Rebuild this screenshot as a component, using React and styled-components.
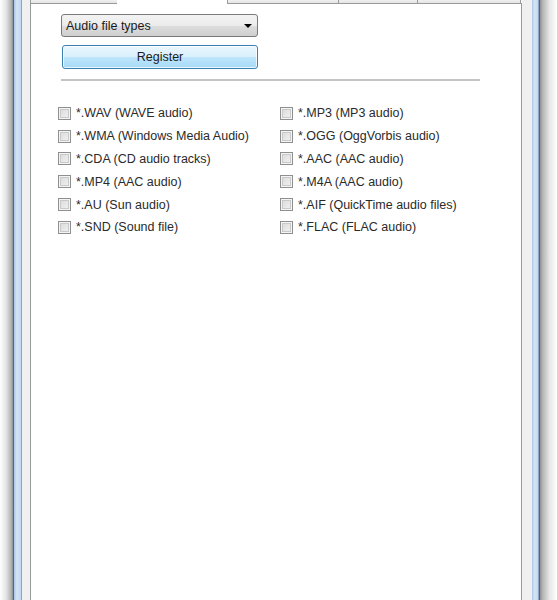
import React from "react";
import styled, { createGlobalStyle } from "styled-components";

const Global = createGlobalStyle`
  html, body { margin: 0; padding: 0; background: #fff; }
  body { font-family: "Liberation Sans", Arial, sans-serif; font-size: 12.5px; color: #1e1e1e; }
`;

const Window = styled.div`
  display: flex;
  width: 557px;
  height: 600px;
  overflow: hidden;
`;

const Frame = styled.div`
  display: flex;
  flex-direction: ${(p) => (p.$side === "right" ? "row-reverse" : "row")};
  flex: none;
`;

const Shade = styled.div`
  width: ${(p) => p.$w}px;
  background: linear-gradient(
    to ${(p) => (p.$side === "right" ? "left" : "right")},
    #ffffff 0%,
    #e6e6e6 45%,
    #b4b4b4 85%,
    #8a8e96 100%
  );
`;

const Edge = styled.div`
  width: ${(p) => p.$w}px;
  background: ${(p) => p.$c};
`;

const Glass = styled.div`
  width: ${(p) => p.$w}px;
  background: linear-gradient(to right, #a9c6e6, #d4e4f5 40%, #c2d8ef);
`;

const Sheet = styled.div`
  flex: 1;
  display: flex;
  flex-direction: column;
  min-width: 0;
`;

const TabStrip = styled.div`
  display: flex;
  height: 4px;
  flex: none;
`;

const Tab = styled.div`
  width: ${(p) => p.$w}px;
  flex: none;
  box-sizing: border-box;
  background: ${(p) => (p.$active ? "#ffffff" : "linear-gradient(#f0f0f0, #e4e4e4)")};
  border-left: 1px solid ${(p) => (p.$active ? "transparent" : "#9a9a9a")};
  border-right: ${(p) => (p.$last ? "1px solid #9a9a9a" : "none")};
  border-bottom: 1px solid ${(p) => (p.$active ? "transparent" : "#9a9a9a")};
`;

const TabFill = styled.div`
  flex: 1;
  border-bottom: 1px solid #9a9a9a;
`;

const Panel = styled.div`
  flex: 1;
  background: #ffffff;
  border-left: 1px solid #9a9a9a;
  border-right: 1px solid #9a9a9a;
  padding: 10px 0 0 30px;
  display: flex;
  flex-direction: column;
`;

const Controls = styled.div`
  display: flex;
  flex-direction: column;
  gap: 8px;
  width: 197px;
`;

const Combo = styled.div`
  height: 23px;
  box-sizing: border-box;
  border: 1px solid #7a7a7a;
  border-radius: 3px;
  background: linear-gradient(#f3f3f3 0%, #ebebeb 50%, #dddddd 51%, #cfcfcf 100%);
  display: flex;
  align-items: center;
  justify-content: space-between;
  padding: 0 5px 0 4px;
  color: #1a1a1a;
`;

const Arrow = styled.span`
  width: 0;
  height: 0;
  border-left: 4px solid transparent;
  border-right: 4px solid transparent;
  border-top: 4px solid #000;
`;

const Button = styled.div`
  height: 24px;
  box-sizing: border-box;
  border: 1px solid #3c7fb1;
  border-radius: 3px;
  background: linear-gradient(#eaf6fd 0%, #d9f0fc 50%, #bee6fd 51%, #a7d9f5 100%);
  box-shadow: inset 0 0 0 1px rgba(255, 255, 255, 0.75);
  display: flex;
  align-items: center;
  justify-content: center;
  color: #1a1a1a;
  margin-left: 1px;
`;

const Rule = styled.div`
  width: 419px;
  height: 2px;
  background: #c4c4c4;
  margin-top: 10px;
`;

const Grid = styled.div`
  display: grid;
  grid-template-columns: 222px 222px;
  grid-auto-rows: 22.8px;
  margin: 21px 0 0 -3px;
`;

const Option = styled.label`
  display: flex;
  align-items: center;
  gap: 5px;
  color: #2a2a2a;
  white-space: nowrap;
`;

const Box = styled.span`
  width: 13px;
  height: 13px;
  box-sizing: border-box;
  border: 1px solid #8e8f8f;
  background: linear-gradient(135deg, #d8d8d8, #f4f4f4);
  box-shadow: inset 0 0 0 1px #f4f4f4, inset 0 0 0 2px #c9c9c9;
  flex: none;
`;

const left = [
  "*.WAV (WAVE audio)",
  "*.WMA (Windows Media Audio)",
  "*.CDA (CD audio tracks)",
  "*.MP4 (AAC audio)",
  "*.AU (Sun audio)",
  "*.SND (Sound file)",
];
const right = [
  "*.MP3 (MP3 audio)",
  "*.OGG (OggVorbis audio)",
  "*.AAC (AAC audio)",
  "*.M4A (AAC audio)",
  "*.AIF (QuickTime audio files)",
  "*.FLAC (FLAC audio)",
];

export default function App() {
  const rows = [];
  left.forEach((l, i) => {
    rows.push(l, right[i]);
  });
  return (
    <>
      <Global />
      <Window>
        <Frame $side="left">
          <Shade $w={13} $side="left" />
          <Edge $w={1} $c="#5d6670" />
          <Glass $w={7} />
          <Edge $w={1} $c="#8fa6c0" />
          <Edge $w={8} $c="#f0f0f0" />
        </Frame>
        <Sheet>
          <TabStrip>
            <Tab $w={87} />
            <Tab $w={110} $active />
            <Tab $w={111} />
            <Tab $w={79} />
            <Tab $w={104} $last />
            <TabFill />
          </TabStrip>
          <Panel>
            <Controls>
              <Combo>
                Audio file types
                <Arrow />
              </Combo>
              <Button>Register</Button>
            </Controls>
            <Rule />
            <Grid>
              {rows.map((t) => (
                <Option key={t}>
                  <Box />
                  {t}
                </Option>
              ))}
            </Grid>
          </Panel>
        </Sheet>
        <Frame $side="right">
          <Shade $w={17} $side="right" />
          <Edge $w={1} $c="#5d6670" />
          <Edge $w={1} $c="#8fa6c0" />
          <Glass $w={6} />
          <Edge $w={10} $c="#f0f0f0" />
        </Frame>
      </Window>
    </>
  );
}
